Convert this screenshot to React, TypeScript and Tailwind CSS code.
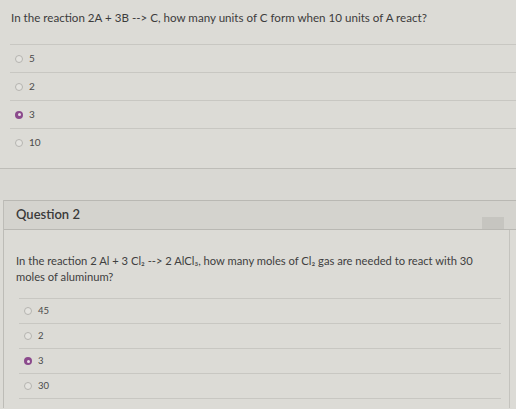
import React from 'react';

type Opt = { label: string; checked?: boolean };

const q1: Opt[] = [{ label: '5' }, { label: '2' }, { label: '3', checked: true }, { label: '10' }];
const q2: Opt[] = [{ label: '45' }, { label: '2' }, { label: '3', checked: true }, { label: '30' }];

function Radio({ checked }: { checked?: boolean }) {
  if (checked) {
    return (
      <span className="w-[8px] h-[8px] rounded-full bg-[#8b4a8c] flex items-center justify-center shrink-0">
        <span className="w-[3px] h-[3px] rounded-full bg-[#e8e0e6]" />
      </span>
    );
  }
  return <span className="w-[8px] h-[8px] rounded-full border border-[#b5b4b0] bg-[#e4e3df] shrink-0" />;
}

export default function App() {
  return (
    <div
      className="w-[516px] h-[409px] overflow-hidden bg-[#dcdbd6] text-[#3c3c3c]"
      style={{ fontFamily: 'Lato, "Open Sans", "DejaVu Sans", sans-serif' }}
    >
      {/* question 1 */}
      <p className="pt-[11px] pl-[11px] text-[11.6px] leading-[14px] h-[44px]">
        In the reaction 2A + 3B --&gt; C, how many units of C form when 10 units of A react?
      </p>
      <div className="ml-[10px]">
        {q1.map((o, i) => (
          <div key={i} className="h-[28px] border-t border-[#c8c7c2] flex items-center gap-[6px] pl-[5px] text-[10px]">
            <Radio checked={o.checked} />
            <span className="text-[#4a4a4a]">{o.label}</span>
          </div>
        ))}
      </div>
      <div className="mt-[12px] border-t border-[#bebdb8] h-[32px] bg-[#d9d8d3]" />

      {/* question 2 */}
      <div className="ml-[3px] border-l border-[#bdbcb7]">
        <div className="h-[30px] border-t border-b border-[#b9b8b3] bg-[#d4d3ce] flex items-center justify-between pl-[12px] pr-[12px]">
          <span className="text-[13px] font-semibold text-[#3a3a3a]">Question 2</span>
          <span className="w-[22px] h-[12px] bg-[#c6c5c0] mt-[16px]" />
        </div>
        <div className="mr-[6px] border-r border-[#c4c3be]">
          <p className="pt-[23px] pl-[12px] pr-[16px] text-[11.2px] leading-[16px] h-[68px] text-[#404040]">
            In the reaction 2 Al + 3 Cl₂ --&gt; 2 AlCl₃, how many moles of Cl₂ gas are needed to react with 30 moles
            of aluminum?
          </p>
          <div className="ml-[15px] mr-[8px]">
            {q2.map((o, i) => (
              <div key={i} className="h-[25px] border-t border-[#c8c7c2] flex items-center gap-[6px] pl-[5px] text-[9.5px]">
                <Radio checked={o.checked} />
                <span className="text-[#4a4a4a]">{o.label}</span>
              </div>
            ))}
            <div className="border-t border-[#c8c7c2] h-[10px]" />
          </div>
        </div>
      </div>
    </div>
  );
}
